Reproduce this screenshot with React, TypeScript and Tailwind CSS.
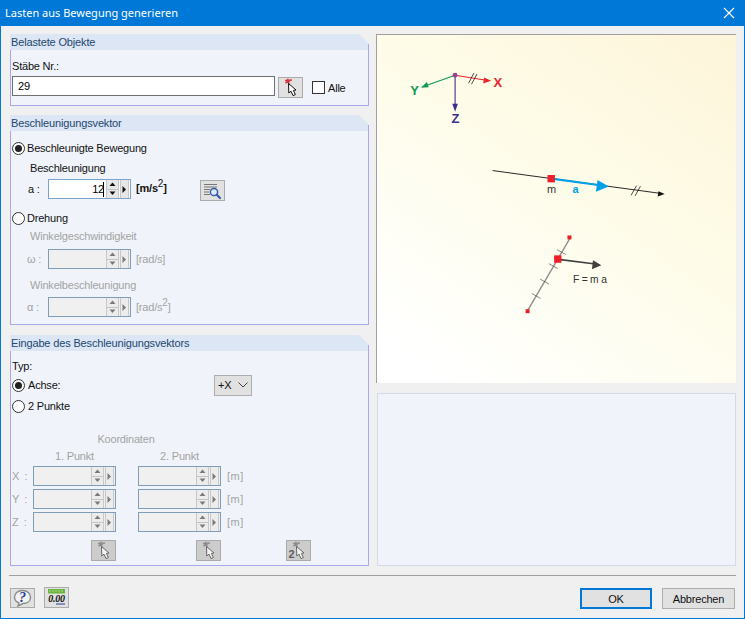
import React from "react";

const FONT = "font-['Liberation_Sans',sans-serif]";

function Panel({ title, className, children }: { title: string; className: string; children: React.ReactNode }) {
  return (
    <section className={`flex flex-col ${className}`}>
      <div className="h-[16px] shrink-0 bg-[#dce6f4] pl-[1px] flex items-center text-[#23466f] tracking-[-0.15px] [clip-path:polygon(0_0,calc(100%-10px)_0,100%_10px,100%_100%,0_100%)]">
        {title}
      </div>
      <div className="relative flex-1 flex flex-col border-x border-b border-[#a9a9ea] bg-[#f0f4fa]">
        <div className="absolute right-[-1px] top-[-6px] h-[6px] w-px bg-[#a9a9ea]" />
        {children}
      </div>
    </section>
  );
}

function Radio({ checked }: { checked?: boolean }) {
  return (
    <span className="w-[13px] h-[13px] shrink-0 rounded-full border border-[#333] bg-white flex items-center justify-center">
      {checked && <span className="w-[7px] h-[7px] rounded-full bg-[#222]" />}
    </span>
  );
}

function Tri({ dir, disabled }: { dir: "up" | "down" | "right"; disabled?: boolean }) {
  const d = dir === "up" ? "M0.5 4 L3.5 0.5 L6.5 4Z" : dir === "down" ? "M0.5 0.5 L6.5 0.5 L3.5 4Z" : "M0.5 0 L4 3.5 L0.5 7Z";
  return (
    <svg width={dir === "right" ? 5 : 7} height={dir === "right" ? 7 : 5} viewBox={dir === "right" ? "0 0 5 7" : "0 0 7 5"}>
      <path d={d} fill={disabled ? "#7a7a7a" : "#111"} />
    </svg>
  );
}

function Stepper({ value, disabled, focus }: { value?: string; disabled?: boolean; focus?: boolean }) {
  return (
    <div className={`w-[83px] h-[20px] shrink-0 flex border ${focus ? "border-[#7da2ce]" : "border-[#7f9db9]"} ${disabled ? "bg-[#f0f0f0]" : "bg-white"}`}>
      <div className="flex-1 flex items-center justify-end pr-[2px] text-black">
        {value}
        {focus && <span className="inline-block w-px h-[15px] bg-black ml-[-1px]" />}
      </div>
      <div className={`w-[13px] flex flex-col ${disabled ? "bg-[#ececec]" : "bg-[#e6e6e6]"} border-x border-[#c8c8c8]`}>
        <span className="flex-1 flex items-center justify-center border-b border-[#c4c4c4]"><Tri dir="up" disabled={disabled} /></span>
        <span className="flex-1 flex items-center justify-center"><Tri dir="down" disabled={disabled} /></span>
      </div>
      <div className={`w-[9px] ml-px mr-px flex items-center justify-center border-x border-[#c8c8c8] ${disabled ? "bg-[#ececec]" : "bg-[#e6e6e6]"}`}>
        <Tri dir="right" disabled={disabled} />
      </div>
    </div>
  );
}

function PickIcon({ disabled, two }: { disabled?: boolean; two?: boolean }) {
  const pin = disabled ? "#8c8c8c" : "#d8303c";
  const fill = disabled ? "#f4f4ee" : "#ffffff";
  const stroke = disabled ? "#666" : "#111";
  return (
    <svg width="23" height="19" viewBox="0 0 23 19">
      <path d="M6 2.5 L13 2 M8.5 0.8 L10 6 M6.5 5 L11 2.5" fill="none" stroke={pin} strokeWidth="1.5" />
      <path d="M9.5 5.5 L9.8 15 L12 13.2 L14 17.6 L16.4 16.6 L14.4 12.4 L17 12Z" fill={fill} stroke={stroke} strokeWidth="1" strokeLinejoin="round" />
      {two && <text x="1.5" y="17" fontSize="11" fontWeight="700" fill="#5c5c5c" fontFamily="Liberation Sans">2</text>}
    </svg>
  );
}

function IconBtn({ children, disabled, className = "" }: { children: React.ReactNode; disabled?: boolean; className?: string }) {
  return (
    <div className={`w-[25px] h-[21px] shrink-0 border border-[#ababab] flex items-center justify-center ${disabled ? "bg-[#cccccc]" : "bg-[#e1e1e1]"} ${className}`}>
      {children}
    </div>
  );
}

function CoordRow({ axis }: { axis: string }) {
  return (
    <div className="flex items-center h-[20px] text-[#a3a3a3]">
      <span className="w-[22px] pl-px tracking-[1px]">{axis} :</span>
      <Stepper disabled />
      <span className="w-[22px]" />
      <Stepper disabled />
      <span className="ml-[6px] tracking-[0.5px]">[m]</span>
    </div>
  );
}

function Diagram() {
  return (
    <svg className="w-full h-full block" viewBox="376 34 360 349">
      <g strokeLinecap="round">
        <line x1="454.3" y1="74.3" x2="484" y2="79.2" stroke="#e8262d" strokeWidth="1.1" />
        <path d="M490.5 80 L482.5 82.6 L483.4 76.6Z" fill="#e8262d" />
        <line x1="454.3" y1="74.3" x2="426" y2="84.4" stroke="#0c9a50" strokeWidth="1.1" />
        <path d="M420 86.8 L426 81.2 L427.8 86.4Z" fill="#0c9a50" />
        <line x1="454.3" y1="74.3" x2="454.3" y2="104" stroke="#3b2f8c" strokeWidth="1.1" />
        <path d="M454.3 111 L451.5 103 L457.1 103Z" fill="#3b2f8c" />
        <circle cx="454.3" cy="74.3" r="2.4" fill="#a0408c" />
        <path d="M468 82 L473 72.5 M471 83 L476 73.5" stroke="#222" strokeWidth="0.8" />
        <line x1="492.3" y1="170" x2="660" y2="192.8" stroke="#111" strokeWidth="0.9" />
        <path d="M664.5 193.4 L657.5 196 L658.2 190.8Z" fill="#111" />
        <path d="M631 194.5 L636 185.5 M635 195 L640 186" stroke="#222" strokeWidth="0.8" />
        <line x1="551" y1="178" x2="598" y2="184.4" stroke="#00a0e6" strokeWidth="2.2" />
        <path d="M608.5 186 L595.5 191.2 L597.2 179.4Z" fill="#00a0e6" />
        <rect x="547" y="174.4" width="7.4" height="7.4" fill="#ec2028" />
        <line x1="570" y1="237" x2="526.7" y2="311" stroke="#8f8f8f" strokeWidth="1.4" />
        <g stroke="#555" strokeWidth="0.7">
          <line x1="557" y1="249.5" x2="565" y2="254" />
          <line x1="548.7" y1="263.5" x2="556.7" y2="268" />
          <line x1="540" y1="279" x2="548" y2="283.5" />
          <line x1="531.7" y1="293.5" x2="539.7" y2="298" />
        </g>
        <rect x="567" y="235" width="4" height="4" fill="#ec2028" />
        <rect x="525" y="309" width="4" height="4" fill="#ec2028" />
        <line x1="558" y1="259" x2="593" y2="263.4" stroke="#404040" strokeWidth="1.6" />
        <path d="M601 264.8 L591.5 268.8 L592.6 260Z" fill="#404040" />
        <rect x="553.6" y="255" width="7.4" height="7.4" fill="#ec2028" />
      </g>
      <g fontFamily="Liberation Sans" textAnchor="middle">
        <text x="497" y="86.5" fontSize="13" fontWeight="700" fill="#e8262d">X</text>
        <text x="413.5" y="94.5" fontSize="13" fontWeight="700" fill="#0c9a50">Y</text>
        <text x="454.5" y="122.5" fontSize="13" fontWeight="700" fill="#3b2f8c">Z</text>
        <text x="551" y="192.5" fontSize="11" fill="#333">m</text>
        <text x="575" y="192.5" fontSize="11" fontWeight="700" fill="#00a0e6">a</text>
      </g>
      <text x="572.5" y="283" fontSize="10.3" fontFamily="Liberation Sans" fill="#333">F = m a</text>
    </svg>
  );
}

export default function App() {
  return (
    <div className={`w-[745px] h-[619px] flex flex-col bg-[#f0f0f0] border-x border-b border-[#0078d7] text-[11px] leading-[16px] tracking-[-0.2px] text-[#111] overflow-hidden ${FONT}`}>
      <header className="h-[26px] shrink-0 bg-[#0078d7] text-white flex items-center justify-between pl-[4px] pr-[9px] text-[11px] tracking-normal font-['Noto_Sans',sans-serif]">
        <span>Lasten aus Bewegung generieren</span>
        <svg width="12" height="12" viewBox="0 0 12 12"><path d="M1 1 L11 11 M11 1 L1 11" stroke="#fff" strokeWidth="1.1" /></svg>
      </header>

      <main className="flex pl-[9px] pr-[8px] pt-[8px] h-[549px] shrink-0">
        <div className="w-[359px] shrink-0 flex flex-col">
          <Panel title="Belastete Objekte" className="h-[72px]">
            <div className="mt-[8px] h-[16px] pl-px flex items-center">Stäbe Nr.:</div>
            <div className="mt-[2px] pl-px flex items-start">
              <div className="w-[263px] h-[20px] bg-white border border-[#707070] pl-[5px] flex items-center text-black">29</div>
              <IconBtn className="ml-[3px] mt-px"><PickIcon /></IconBtn>
              <span className="ml-[9px] mt-[5px] w-[13px] h-[13px] bg-white border border-[#333]" />
              <span className="ml-[3px] mt-[4px]">Alle</span>
            </div>
          </Panel>

          <Panel title="Beschleunigungsvektor" className="h-[210px] mt-[9px]">
            <div className="mt-[9px] h-[16px] pl-px flex items-center gap-[2px]"><Radio checked />Beschleunigte Bewegung</div>
            <div className="mt-[4px] h-[16px] pl-[19px] flex items-center">Beschleunigung</div>
            <div className="mt-[3px] h-[22px] flex items-start">
              <span className="w-[37px] pl-[17px] pt-[2px]">a :</span>
              <Stepper value="12" focus />
              <span className="ml-[5px] w-[64px] shrink-0 pt-[1px] font-semibold">[m/s<sup className="text-[10px] font-normal">2</sup>]</span>
              <IconBtn className="mt-px">
                <svg width="21" height="18" viewBox="0 0 21 18">
                  <path d="M2 2.5H15 M2 5H15 M2 7.5H8 M2 10H7 M2 12.5H8" stroke="#777" strokeWidth="1" />
                  <circle cx="12" cy="10" r="3.6" fill="#dcecff" stroke="#3a5aa8" strokeWidth="1.5" />
                  <path d="M14.8 12.8 L18 16" stroke="#3a5aa8" strokeWidth="2.2" strokeLinecap="round" />
                </svg>
              </IconBtn>
            </div>
            <div className="mt-[9px] h-[16px] pl-px flex items-center gap-[2px]"><Radio />Drehung</div>
            <div className="mt-[2px] h-[16px] pl-[19px] flex items-center text-[#a3a3a3]">Winkelgeschwindigkeit</div>
            <div className="mt-[5px] h-[20px] flex items-center text-[#a3a3a3]">
              <span className="w-[37px] pl-[16px]">ω :</span>
              <Stepper disabled />
              <span className="ml-[5px]">[rad/s]</span>
            </div>
            <div className="mt-[8px] h-[16px] pl-[19px] flex items-center text-[#a3a3a3]">Winkelbeschleunigung</div>
            <div className="mt-[4px] h-[20px] flex items-center text-[#a3a3a3]">
              <span className="w-[37px] pl-[16px]">α :</span>
              <Stepper disabled />
              <span className="ml-[5px]">[rad/s<sup className="text-[10px]">2</sup>]</span>
            </div>
          </Panel>

          <Panel title="Eingabe des Beschleunigungsvektors" className="h-[231px] mt-[10px]">
            <div className="mt-[7px] h-[16px] pl-px flex items-center">Typ:</div>
            <div className="h-[22px] pl-px flex items-center">
              <span className="w-[202px] flex items-center gap-[3px]"><Radio checked />Achse:</span>
              <div className="w-[38px] h-[21px] bg-[#e1e1e1] border border-[#adadad] flex items-center pl-[3px] gap-[7px]">
                +X
                <svg width="10" height="6" viewBox="0 0 10 6"><path d="M0.5 0.5 L5 5 L9.5 0.5" fill="none" stroke="#444" strokeWidth="1" /></svg>
              </div>
            </div>
            <div className="h-[20px] pl-px flex items-center gap-[3px]"><Radio />2 Punkte</div>
            <div className="mt-[15px] h-[16px] w-[230px] text-center text-[#a3a3a3]">Koordinaten</div>
            <div className="mt-px h-[16px] flex text-[#a3a3a3]">
              <span className="ml-[22px] w-[83px] text-center">1. Punkt</span>
              <span className="ml-[22px] w-[83px] text-center">2. Punkt</span>
            </div>
            <div className="mt-[2px] flex flex-col gap-[3px]">
              <CoordRow axis="X" />
              <CoordRow axis="Y" />
              <CoordRow axis="Z" />
            </div>
            <div className="mt-[8px] flex">
              <IconBtn disabled className="ml-[80px]"><PickIcon disabled /></IconBtn>
              <IconBtn disabled className="ml-[80px]"><PickIcon disabled /></IconBtn>
              <IconBtn disabled className="ml-[65px]"><PickIcon disabled two /></IconBtn>
            </div>
          </Panel>
        </div>

        <div className="ml-[7px] w-[360px] shrink-0 flex flex-col">
          <div className="h-[349px] border-t border-l border-[#a0a0a0] bg-[linear-gradient(35deg,#ffffff_8%,#fefce9_55%,#fdf5da_100%)]">
            <Diagram />
          </div>
          <div className="mt-[10px] ml-px h-[173px] bg-[#f0f4fa] border border-[#d3dbe8]" />
        </div>
      </main>

      <div className="ml-[8px] mr-[8px] h-px bg-[#a0a0a0] shrink-0" />

      <footer className="mt-[12px] pl-[9px] pr-[9px] flex items-start">
        <IconBtn className="h-[20px]!">
          <svg width="21" height="18" viewBox="0 0 21 18">
            <path d="M10.5 1.5 C15.5 1.5 18.5 4.5 18.5 8.2 C18.5 12 15.5 14.5 11 14.5 L6 17 L7 13.8 C4 12.8 2.5 10.8 2.5 8.2 C2.5 4.5 5.5 1.5 10.5 1.5Z" fill="#f2f2f2" stroke="#8a8a8a" strokeWidth="1.4" />
            <text x="10.5" y="13" textAnchor="middle" fontSize="14" fontWeight="700" fontFamily="Liberation Serif" fontStyle="italic" fill="#1f3a8f">?</text>
          </svg>
        </IconBtn>
        <IconBtn className="ml-[9px] mt-[-1px]">
          <svg width="23" height="19" viewBox="0 0 23 19">
            <rect x="3" y="1" width="17" height="4.5" fill="#6cb33f" />
            <path d="M5 2V4 M8 2V4 M11 2V4 M14 2V4 M17 2V4" stroke="#a8dc80" strokeWidth="1" />
            <text x="11.5" y="14" textAnchor="middle" fontSize="10" fontWeight="700" fontFamily="Liberation Serif" fontStyle="italic" fill="#111">0.00</text>
            <path d="M11 16 H20" stroke="#2a3f8f" strokeWidth="1" />
          </svg>
        </IconBtn>
        <button className="ml-auto w-[72px] h-[21px] bg-[#e1e1e1] border-2 border-[#0078d7] flex items-center justify-center">OK</button>
        <button className="ml-[10px] w-[73px] h-[21px] bg-[#e1e1e1] border border-[#adadad] flex items-center justify-center">Abbrechen</button>
      </footer>
    </div>
  );
}
